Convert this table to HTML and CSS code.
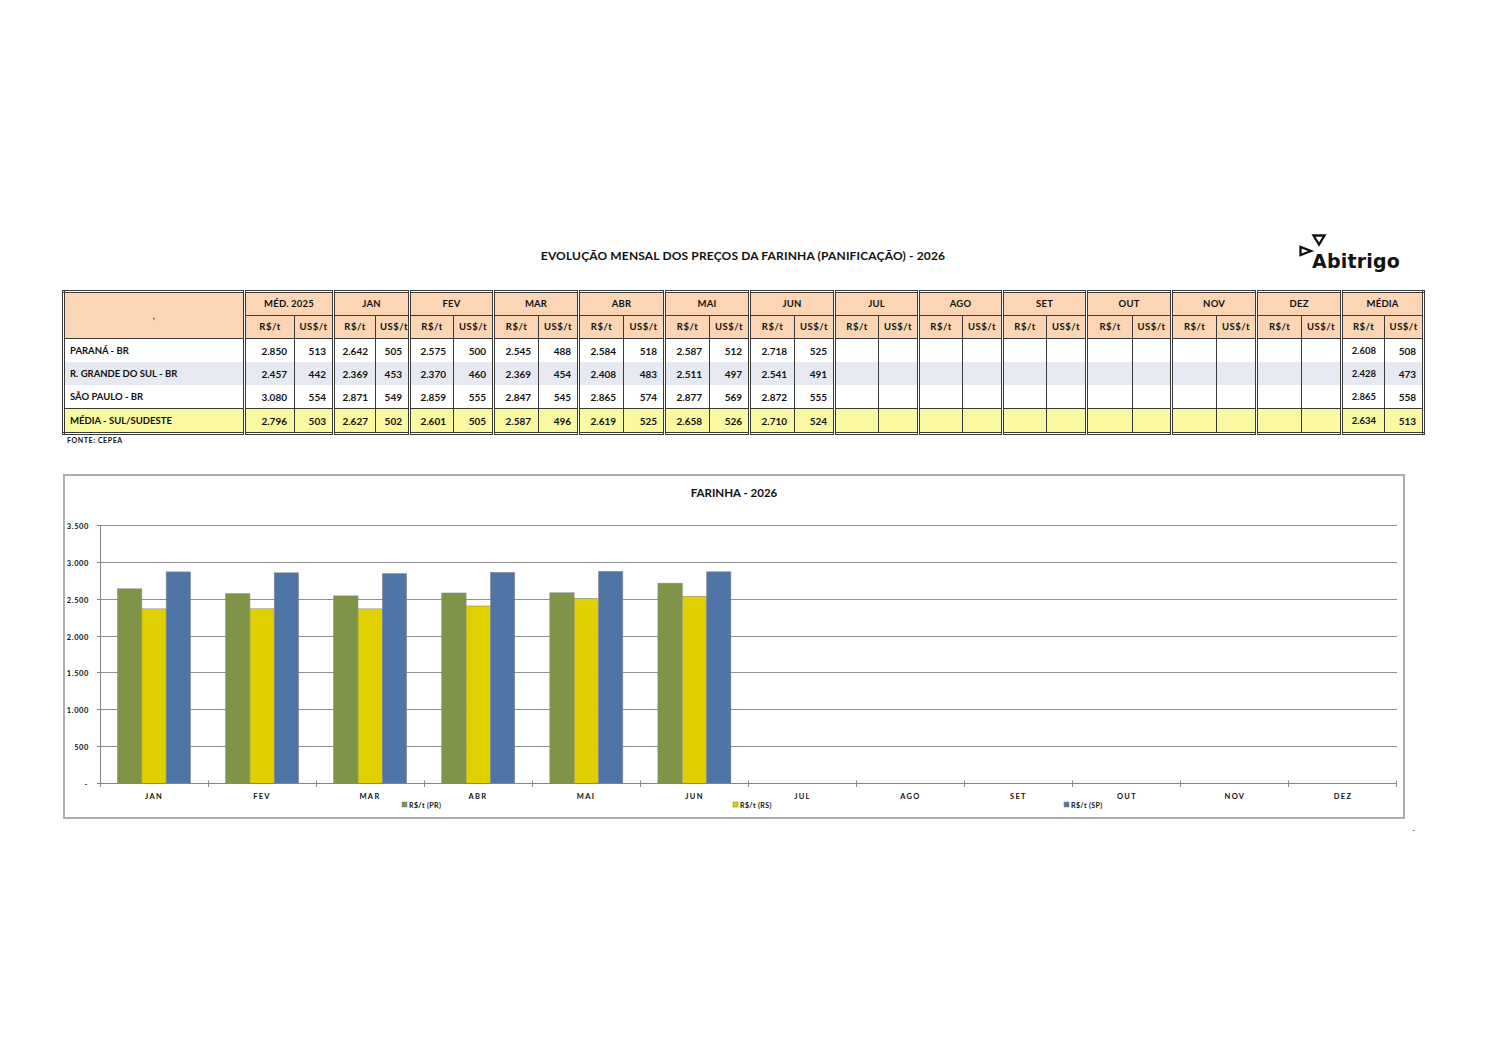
FILE: index.html
```html
<!DOCTYPE html>
<html lang="pt-BR">
<head>
<meta charset="utf-8">
<title>Evolução mensal dos preços da farinha (panificação) - 2026</title>
<link rel="stylesheet" href="styles.css">
</head>
<body>
<div class="page">
  <header class="top">
    <h1 class="title">EVOLUÇÃO MENSAL DOS PREÇOS DA FARINHA (PANIFICAÇÃO) - 2026</h1>
    <div class="logo">
      <svg width="107" height="51" viewBox="0 0 107 51">
        <polygon points="15.5,1.5 26.5,1.5 21,10.5" fill="none" stroke="#111" stroke-width="2.3" stroke-linejoin="miter"/>
        <polygon points="2.5,13 2.5,21 13,17" fill="none" stroke="#111" stroke-width="2.3" stroke-linejoin="miter"/>
        <text x="14" y="34" class="logo-word">Abitrigo</text>
      </svg>
    </div>
  </header>

  <table class="prices">
    <colgroup>
      <col style="width:181px">
      <col style="width:50px"><col style="width:39px">
      <col style="width:42px"><col style="width:34px">
      <col style="width:44px"><col style="width:40px">
      <col style="width:45px"><col style="width:40px">
      <col style="width:45px"><col style="width:41px">
      <col style="width:45px"><col style="width:40px">
      <col style="width:45px"><col style="width:40px">
      <col style="width:44px"><col style="width:40px">
      <col style="width:44px"><col style="width:40px">
      <col style="width:44px"><col style="width:40px">
      <col style="width:46px"><col style="width:39px">
      <col style="width:45px"><col style="width:40px">
      <col style="width:45px"><col style="width:40px">
      <col style="width:43px"><col style="width:39px">
    </colgroup>
    <thead>
      <tr class="h1">
        <th rowspan="2" class="corner">,</th>
        <th colspan="2" class="g">MÉD. 2025</th>
        <th colspan="2" class="g">JAN</th>
        <th colspan="2" class="g">FEV</th>
        <th colspan="2" class="g">MAR</th>
        <th colspan="2" class="g">ABR</th>
        <th colspan="2" class="g">MAI</th>
        <th colspan="2" class="g">JUN</th>
        <th colspan="2" class="g">JUL</th>
        <th colspan="2" class="g">AGO</th>
        <th colspan="2" class="g">SET</th>
        <th colspan="2" class="g">OUT</th>
        <th colspan="2" class="g">NOV</th>
        <th colspan="2" class="g">DEZ</th>
        <th colspan="2" class="g">MÉDIA</th>
      </tr>
      <tr class="h2">
        <th class="g">R$/t</th><th>US$/t</th>
        <th class="g">R$/t</th><th>US$/t</th>
        <th class="g">R$/t</th><th>US$/t</th>
        <th class="g">R$/t</th><th>US$/t</th>
        <th class="g">R$/t</th><th>US$/t</th>
        <th class="g">R$/t</th><th>US$/t</th>
        <th class="g">R$/t</th><th>US$/t</th>
        <th class="g">R$/t</th><th>US$/t</th>
        <th class="g">R$/t</th><th>US$/t</th>
        <th class="g">R$/t</th><th>US$/t</th>
        <th class="g">R$/t</th><th>US$/t</th>
        <th class="g">R$/t</th><th>US$/t</th>
        <th class="g">R$/t</th><th>US$/t</th>
        <th class="g">R$/t</th><th>US$/t</th>
      </tr>
    </thead>
    <tbody>
      <tr>
        <td class="lbl">PARANÁ - BR</td>
        <td class="g">2.850</td><td>513</td>
        <td class="g">2.642</td><td>505</td>
        <td class="g">2.575</td><td>500</td>
        <td class="g">2.545</td><td>488</td>
        <td class="g">2.584</td><td>518</td>
        <td class="g">2.587</td><td>512</td>
        <td class="g">2.718</td><td>525</td>
        <td class="g"></td><td></td>
        <td class="g"></td><td></td>
        <td class="g"></td><td></td>
        <td class="g"></td><td></td>
        <td class="g"></td><td></td>
        <td class="g"></td><td></td>
        <td class="g m">2.608</td><td>508</td>
      </tr>
      <tr class="alt">
        <td class="lbl">R. GRANDE DO SUL - BR</td>
        <td class="g">2.457</td><td>442</td>
        <td class="g">2.369</td><td>453</td>
        <td class="g">2.370</td><td>460</td>
        <td class="g">2.369</td><td>454</td>
        <td class="g">2.408</td><td>483</td>
        <td class="g">2.511</td><td>497</td>
        <td class="g">2.541</td><td>491</td>
        <td class="g"></td><td></td>
        <td class="g"></td><td></td>
        <td class="g"></td><td></td>
        <td class="g"></td><td></td>
        <td class="g"></td><td></td>
        <td class="g"></td><td></td>
        <td class="g m">2.428</td><td>473</td>
      </tr>
      <tr>
        <td class="lbl">SÃO PAULO - BR</td>
        <td class="g">3.080</td><td>554</td>
        <td class="g">2.871</td><td>549</td>
        <td class="g">2.859</td><td>555</td>
        <td class="g">2.847</td><td>545</td>
        <td class="g">2.865</td><td>574</td>
        <td class="g">2.877</td><td>569</td>
        <td class="g">2.872</td><td>555</td>
        <td class="g"></td><td></td>
        <td class="g"></td><td></td>
        <td class="g"></td><td></td>
        <td class="g"></td><td></td>
        <td class="g"></td><td></td>
        <td class="g"></td><td></td>
        <td class="g m">2.865</td><td>558</td>
      </tr>
      <tr class="avg">
        <td class="lbl">MÉDIA - SUL/SUDESTE</td>
        <td class="g">2.796</td><td>503</td>
        <td class="g">2.627</td><td>502</td>
        <td class="g">2.601</td><td>505</td>
        <td class="g">2.587</td><td>496</td>
        <td class="g">2.619</td><td>525</td>
        <td class="g">2.658</td><td>526</td>
        <td class="g">2.710</td><td>524</td>
        <td class="g"></td><td></td>
        <td class="g"></td><td></td>
        <td class="g"></td><td></td>
        <td class="g"></td><td></td>
        <td class="g"></td><td></td>
        <td class="g"></td><td></td>
        <td class="g m">2.634</td><td>513</td>
      </tr>
    </tbody>
  </table>
  <p class="source">FONTE: CEPEA</p>

  <div class="chart">
    <svg class="plot" width="1338" height="341" viewBox="0 0 1338 341">
      <text x="669" y="21" class="ctitle">FARINHA - 2026</text>
      <g class="grid">
        <line x1="35" y1="49.5" x2="1332" y2="49.5"/>
        <line x1="35" y1="86.5" x2="1332" y2="86.5"/>
        <line x1="35" y1="123.5" x2="1332" y2="123.5"/>
        <line x1="35" y1="160.5" x2="1332" y2="160.5"/>
        <line x1="35" y1="196.5" x2="1332" y2="196.5"/>
        <line x1="35" y1="233.5" x2="1332" y2="233.5"/>
        <line x1="35" y1="270.5" x2="1332" y2="270.5"/>
      </g>
      <g class="bars">
        <rect class="pr" x="52.5" y="112.8" width="24.33" height="194.7"/>
        <rect class="rs" x="76.83" y="132.9" width="24.33" height="174.6"/>
        <rect class="sp" x="101.17" y="95.9" width="24.33" height="211.6"/>

        <rect class="pr" x="160.58" y="117.7" width="24.33" height="189.8"/>
        <rect class="rs" x="184.91" y="132.8" width="24.33" height="174.7"/>
        <rect class="sp" x="209.25" y="96.8" width="24.33" height="210.7"/>

        <rect class="pr" x="268.67" y="119.9" width="24.33" height="187.6"/>
        <rect class="rs" x="293" y="132.9" width="24.33" height="174.6"/>
        <rect class="sp" x="317.33" y="97.6" width="24.33" height="209.9"/>

        <rect class="pr" x="376.75" y="117.0" width="24.33" height="190.5"/>
        <rect class="rs" x="401.08" y="130.0" width="24.33" height="177.5"/>
        <rect class="sp" x="425.42" y="96.3" width="24.33" height="211.2"/>

        <rect class="pr" x="484.83" y="116.8" width="24.33" height="190.7"/>
        <rect class="rs" x="509.17" y="122.4" width="24.33" height="185.1"/>
        <rect class="sp" x="533.5" y="95.4" width="24.33" height="212.1"/>

        <rect class="pr" x="592.92" y="107.2" width="24.33" height="200.3"/>
        <rect class="rs" x="617.25" y="120.2" width="24.33" height="187.3"/>
        <rect class="sp" x="641.58" y="95.8" width="24.33" height="211.7"/>
      </g>
      <g class="axis">
        <line x1="35.5" y1="49.5" x2="35.5" y2="307.5"/>
        <line x1="35" y1="307.5" x2="1332" y2="307.5"/>
        <line x1="32" y1="49.5" x2="35.5" y2="49.5"/>
        <line x1="32" y1="86.5" x2="35.5" y2="86.5"/>
        <line x1="32" y1="123.5" x2="35.5" y2="123.5"/>
        <line x1="32" y1="160.5" x2="35.5" y2="160.5"/>
        <line x1="32" y1="196.5" x2="35.5" y2="196.5"/>
        <line x1="32" y1="233.5" x2="35.5" y2="233.5"/>
        <line x1="32" y1="270.5" x2="35.5" y2="270.5"/>
        <line x1="32" y1="307.5" x2="35.5" y2="307.5"/>
        <line x1="35.5" y1="307.5" x2="35.5" y2="311"/>
        <line x1="143.5" y1="304.5" x2="143.5" y2="311"/>
        <line x1="251.5" y1="304.5" x2="251.5" y2="311"/>
        <line x1="359.5" y1="304.5" x2="359.5" y2="311"/>
        <line x1="467.5" y1="304.5" x2="467.5" y2="311"/>
        <line x1="575.5" y1="304.5" x2="575.5" y2="311"/>
        <line x1="683.5" y1="304.5" x2="683.5" y2="311"/>
        <line x1="791.5" y1="304.5" x2="791.5" y2="311"/>
        <line x1="899.5" y1="304.5" x2="899.5" y2="311"/>
        <line x1="1007.5" y1="304.5" x2="1007.5" y2="311"/>
        <line x1="1115.5" y1="304.5" x2="1115.5" y2="311"/>
        <line x1="1223.5" y1="304.5" x2="1223.5" y2="311"/>
        <line x1="1331.5" y1="304.5" x2="1331.5" y2="311"/>
      </g>
      <g class="ylab">
        <text x="24" y="52.5">3.500</text>
        <text x="24" y="89.5">3.000</text>
        <text x="24" y="126.5">2.500</text>
        <text x="24" y="163.5">2.000</text>
        <text x="24" y="199.5">1.500</text>
        <text x="24" y="236.5">1.000</text>
        <text x="24" y="273.5">500</text>
        <text x="23" y="310.5">-</text>
      </g>
      <g class="xlab">
        <text x="89" y="323">JAN</text>
        <text x="197" y="323">FEV</text>
        <text x="305" y="323">MAR</text>
        <text x="413" y="323">ABR</text>
        <text x="521" y="323">MAI</text>
        <text x="629.5" y="323">JUN</text>
        <text x="737.5" y="323">JUL</text>
        <text x="845.5" y="323">AGO</text>
        <text x="953.5" y="323">SET</text>
        <text x="1062" y="323">OUT</text>
        <text x="1170" y="323">NOV</text>
        <text x="1278" y="323">DEZ</text>
      </g>
      <g class="legend">
        <rect class="pr" x="337" y="326" width="5" height="5"/>
        <text x="344" y="331.5">R$/t (PR)</text>
        <rect class="rs lg-rs" x="668" y="326" width="5" height="5"/>
        <text x="675" y="331.5">R$/t (RS)</text>
        <rect class="sp" x="999" y="326" width="5" height="5"/>
        <text x="1006" y="331.5">R$/t (SP)</text>
      </g>
    </svg>
  </div>
  <div class="dash">-</div>
</div>
</body>
</html>
```

FILE: styles.css
```css
html, body {
  margin: 0;
  padding: 0;
  background: #ffffff;
}

body {
  font-family: Lato, "Liberation Sans", "DejaVu Sans", sans-serif;
  color: #111111;
}

.page {
  width: 1362px;
  padding: 234px 0 0 62px;
}

/* ---------- heading row ---------- */
.top {
  display: grid;
  grid-template-columns: 1fr auto 1fr;
  height: 51px;
  margin-bottom: 5px;
}

.title {
  grid-column: 2;
  margin: 15px 0 0;
  font-size: 12px;
  line-height: 14px;
  font-weight: 700;
  letter-spacing: 0.15px;
  white-space: nowrap;
}

.logo {
  grid-column: 3;
  justify-self: end;
  margin-right: 19px;
  width: 107px;
  height: 51px;
}

.logo svg {
  display: block;
}

.logo-word {
  font-family: "DejaVu Sans", sans-serif;
  font-size: 19px;
  font-weight: 700;
  letter-spacing: 0.2px;
  fill: #111111;
}

/* ---------- table ---------- */
.prices {
  border-collapse: collapse;
  table-layout: fixed;
  width: 1360px;
  border: 3px double #3a3a3a;
  font-size: 10px;
  font-weight: 700;
}

.prices th,
.prices td {
  border: 1px solid #3a3a3a;
  padding: 0 4px;
  line-height: 12px;
  white-space: nowrap;
  overflow: hidden;
}

.prices .g {
  border-left: 3px double #3a3a3a;
}

.prices thead th {
  background: #fcd5b4;
  text-align: center;
  font-size: 9.5px;
  height: 22px;
  letter-spacing: 0.2px;
}

.prices thead .h2 th {
  letter-spacing: 0.5px;
  font-weight: 700;
}

.prices .corner {
  font-weight: 400;
}

.prices tbody td {
  border-top: none;
  border-bottom: none;
  text-align: right;
  height: 23px;
  padding-right: 6px;
}

.prices tbody td.g {
  padding-right: 7px;
}

.prices tbody td.lbl {
  text-align: left;
  padding-left: 5px;
  font-size: 9.5px;
}

.prices tbody td.m {
  font-size: 9.5px;
  padding-right: 8px;
}

.prices tr.alt td {
  background: #e6e9f1;
}

.prices tr.avg td {
  background: #faf8a0;
  border-top: 1px solid #3a3a3a;
}

.source {
  margin: 0 0 0 5px;
  font-size: 7px;
  line-height: 10px;
  font-weight: 700;
  letter-spacing: 0.6px;
}

/* ---------- chart ---------- */
.chart {
  width: 1338px;
  height: 341px;
  margin: 29px 0 0 1px;
  border: 2px solid #adadad;
}

.plot {
  display: block;
}

.ctitle {
  font-family: Lato, "Liberation Sans", sans-serif;
  font-size: 11.5px;
  font-weight: 700;
  text-anchor: middle;
  fill: #111111;
}

.grid line {
  stroke: #8f8f8f;
  stroke-width: 1;
}

.axis line {
  stroke: #858585;
  stroke-width: 1;
}

.bars rect,
.legend rect {
  stroke: #8a8a8a;
  stroke-width: 0.6;
}

.pr { fill: #7f9447; }
.rs { fill: #e1d000; }
.sp { fill: #4f74a6; }

.legend .lg-rs {
  stroke: #7d8a2e;
}

.ylab text {
  font-family: Lato, "Liberation Sans", sans-serif;
  font-size: 7.5px;
  font-weight: 700;
  letter-spacing: 0.6px;
  text-anchor: end;
  fill: #111111;
}

.xlab text {
  font-family: Lato, "Liberation Sans", sans-serif;
  font-size: 7.5px;
  font-weight: 700;
  letter-spacing: 1.3px;
  text-anchor: middle;
  fill: #111111;
}

.legend text {
  font-family: Lato, "Liberation Sans", sans-serif;
  font-size: 7px;
  font-weight: 700;
  letter-spacing: 0.4px;
  fill: #111111;
}

.dash {
  margin-top: 6px;
  padding-right: 9px;
  text-align: right;
  font-size: 8px;
  line-height: 10px;
}
```
